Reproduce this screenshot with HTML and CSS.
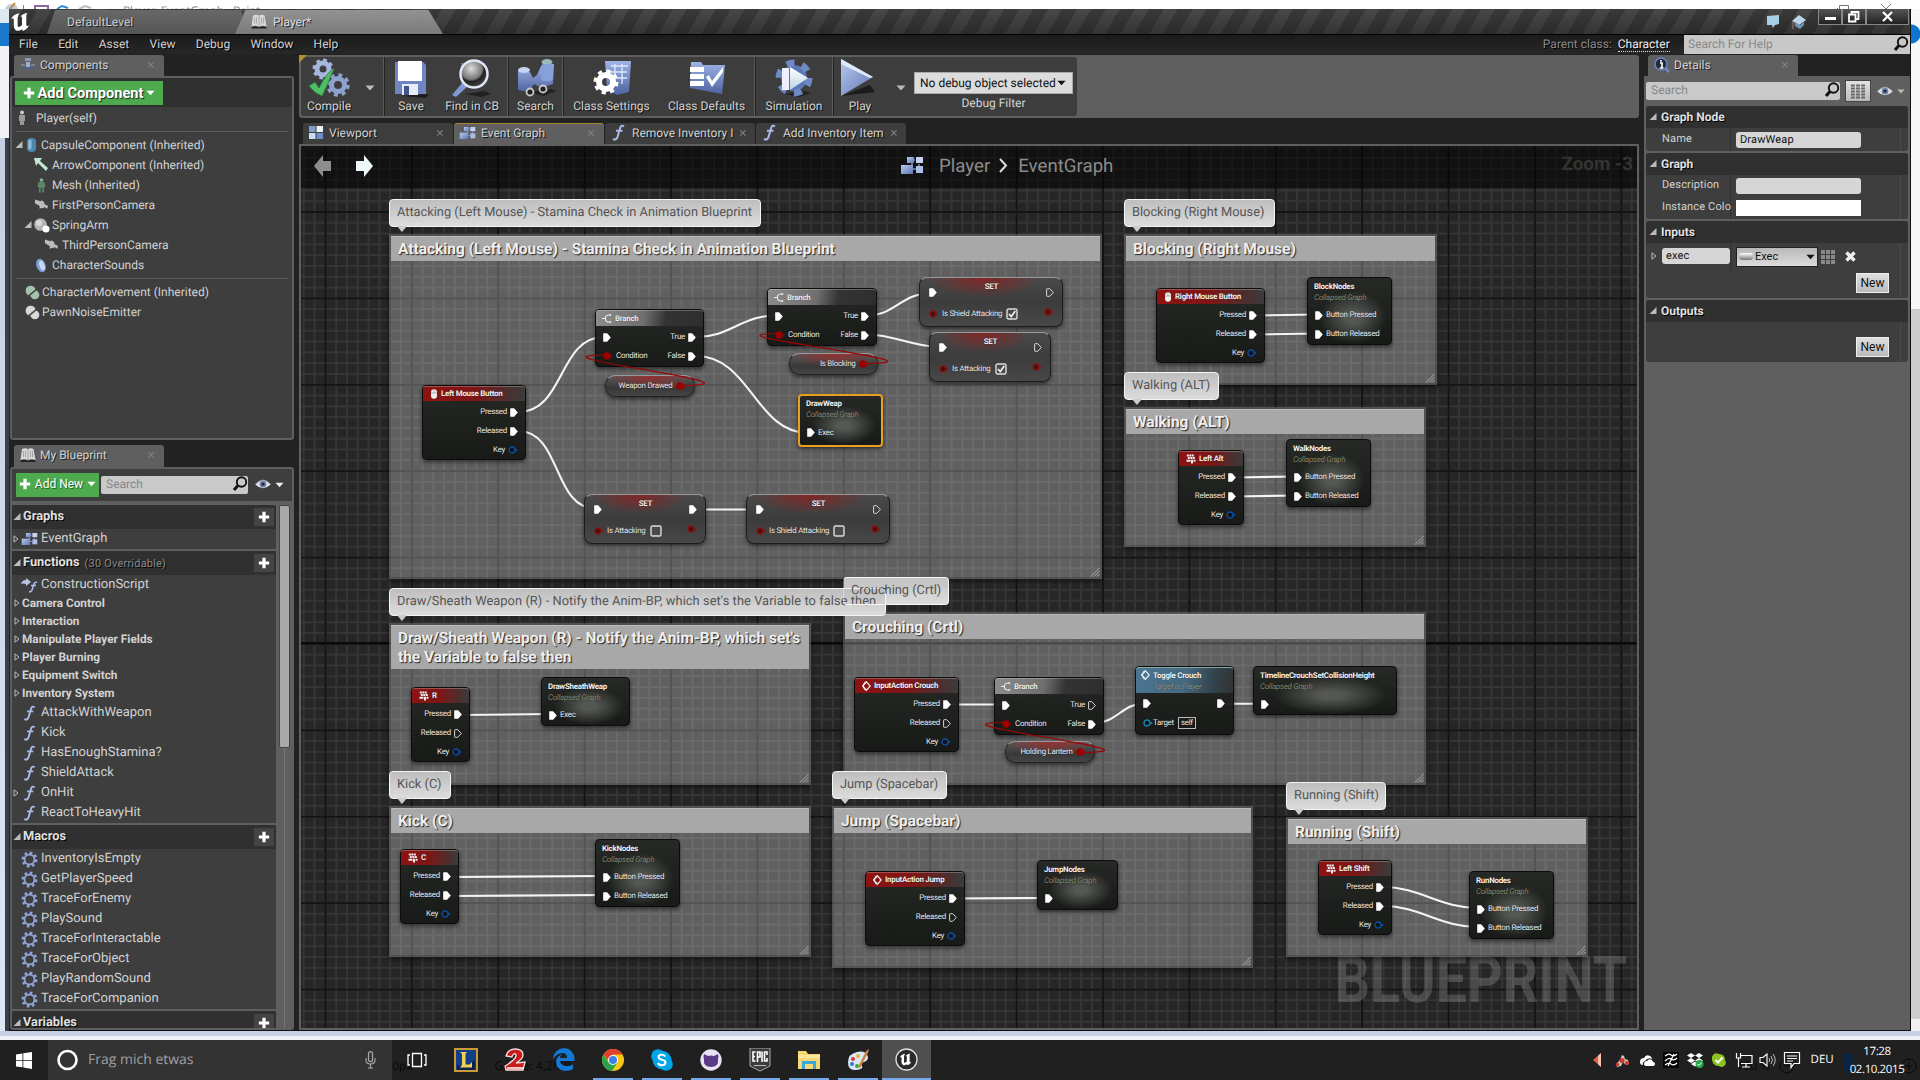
FILE: index.html
```html
<!DOCTYPE html>
<html lang="en">
<head>
<meta charset="utf-8">
<title>Player - Blueprint Editor</title>
<link rel="stylesheet" href="styles.css">
</head>
<body>
<svg class="defs" width="0" height="0">
  <defs>
    <linearGradient id="gBlue" x1="0" y1="0" x2="1" y2="1"><stop offset="0" stop-color="#b9c9ee"/><stop offset="1" stop-color="#5f76b4"/></linearGradient>
    <linearGradient id="gWhite" x1="0" y1="0" x2="0" y2="1"><stop offset="0" stop-color="#fff"/><stop offset="1" stop-color="#b9d6e4"/></linearGradient>
    <linearGradient id="gSteel" x1="0" y1="0" x2="0" y2="1"><stop offset="0" stop-color="#9fb4e6"/><stop offset="1" stop-color="#4c64a0"/></linearGradient>
    <radialGradient id="gLens" cx=".4" cy=".3" r=".8"><stop offset="0" stop-color="#ddd"/><stop offset=".5" stop-color="#777"/><stop offset=".6" stop-color="#222"/><stop offset="1" stop-color="#555"/></radialGradient>
  </defs>
  <symbol id="exec" viewBox="0 0 8 9"><path d="M.6.3H3.8Q4.4.3 4.8.9L7.8 4.5 4.8 8.1Q4.4 8.7 3.8 8.7H.6Q.2 8.7.2 8.2V.8Q.2.3.6.3z" fill="#fff"/></symbol>
  <symbol id="exec-off" viewBox="0 0 8 9"><path d="M1.2.7H3.7L7.3 4.5 3.7 8.3H1.2Q.6 8.3.6 7.7V1.3Q.6.7 1.2.7z" fill="none" stroke="#d8d8d8" stroke-width="1"/></symbol>
  <symbol id="bool" viewBox="0 0 10 8"><circle cx="4" cy="4" r="3.8" fill="#9c0000"/><path d="M7.6 2.2L9.8 4 7.6 5.8z" fill="#9c0000"/></symbol>
  <symbol id="bool-off" viewBox="0 0 10 8"><circle cx="4" cy="4" r="2.8" fill="#3a1212" stroke="#8a0e0e" stroke-width="1.7"/><path d="M7.4 2.4L9.6 4 7.4 5.6z" fill="#8a0e0e"/></symbol>
  <symbol id="key" viewBox="0 0 10 8"><circle cx="4" cy="4" r="3" fill="#10131a" stroke="#0d4fa6" stroke-width="1.3"/><path d="M7.5 2.3L9.7 4 7.5 5.7z" fill="#0d4fa6"/></symbol>
  <symbol id="obj" viewBox="0 0 10 8"><circle cx="4" cy="4" r="3" fill="#10131a" stroke="#1583ac" stroke-width="1.4"/><path d="M7.5 2.3L9.7 4 7.5 5.7z" fill="#1583ac"/></symbol>
  <symbol id="branch" viewBox="0 0 10 9"><path d="M0 4.5H3.4M9 1H6.5Q3.4 1.3 3.4 4.5T6.5 8H9" fill="none" stroke="#eee" stroke-width="1.1"/><path d="M7.6 0L9.8 1 7.6 2.2zM7.6 6.8L9.8 8 7.6 9z" fill="#eee"/></symbol>
  <symbol id="mouse" viewBox="0 0 8 10"><rect x="1" y=".3" width="6" height="9.4" rx="3" fill="#eee"/><path d="M1 4H7M4 .4V4" stroke="#999" stroke-width=".7"/></symbol>
  <symbol id="keys" viewBox="0 0 10 10"><path d="M.8.5h2v2h-2zM3.3.5h2v2h-2zM5.800.5h2v2h-2zM1.800 3.1h2v2h-2zM4.300 3.1h2v2h-2zM6.800 3.1h2v2h-2zM.5 5.700h4v2h-4zM5 5.700h2v3.800h-2zM7.500 5.700h2v2h-2z" fill="#eee"/></symbol>
  <symbol id="diamond" viewBox="0 0 9 10"><path d="M4.5.8L8.2 5 4.5 9.2.8 5z" fill="none" stroke="#eee" stroke-width="1.2"/><path d="M3.3.5L.5 5 3.3 9.5" fill="none" stroke="#eee" stroke-width="1"/></symbol>
  <symbol id="check" viewBox="0 0 12 12"><rect x="1" y="1" width="10" height="10" rx="1.5" fill="#4a4a4a" stroke="#ddd" stroke-width="1.4"/><path d="M3 6l2.2 2.6L9.3 3" fill="none" stroke="#eee" stroke-width="1.7"/></symbol>
  <symbol id="uncheck" viewBox="0 0 12 12"><rect x="1" y="1" width="10" height="10" rx="1.5" fill="#4a4a4a" stroke="#ddd" stroke-width="1.4"/></symbol>
  <symbol id="grip" viewBox="0 0 10 10"><path d="M1 9.5L9.5 1M4 9.5L9.5 4M7 9.5L9.5 7" stroke="#aaa" stroke-width="1"/></symbol>
  <symbol id="open" viewBox="0 0 8 8"><path d="M7.5 0V7H.5z" fill="#bbb"/></symbol>
  <symbol id="closed" viewBox="0 0 6 8"><path d="M1 .8L5 4 1 7.2z" fill="none" stroke="#bbb" stroke-width="1"/></symbol>
  <symbol id="caret" viewBox="0 0 10 6"><path d="M.5.5H9.5L5 5.5z" fill="currentColor"/></symbol>
  <symbol id="x" viewBox="0 0 8 8"><path d="M1.2 1.2l5.4 5.4M6.6 1.2L1.2 6.6" stroke="#828282" stroke-width="1.1"/></symbol>
  <symbol id="lens" viewBox="0 0 16 16"><circle cx="9.5" cy="6" r="4.7" fill="none" stroke="#111" stroke-width="1.9"/><path d="M6.2 9.3L2 14" stroke="#111" stroke-width="3"/></symbol>
  <symbol id="eye" viewBox="0 0 18 12"><path d="M.5 6Q9-4 17.5 6 9 14 .5 6z" fill="#dde0e6"/><circle cx="9" cy="5.6" r="3.6" fill="#6c7fa8"/><circle cx="9" cy="5.6" r="1.6" fill="#223"/><path d="M.5 6Q9-4 17.5 6" fill="none" stroke="#888" stroke-width=".8"/></symbol>
  <symbol id="plus" viewBox="0 0 12 12"><path d="M4.4 0.8h3.2v3.6h3.6v3.2H7.6v3.6H4.4V7.6H.8V4.4h3.6z" fill="#fff"/></symbol>
  <symbol id="book" viewBox="0 0 16 14"><path d="M2 1Q5-.5 8 1 11-.5 13.500 1L15.500 12Q11 10.500 8 12 4 10.500.5 12z" fill="#d8d8d8"/><path d="M8 1V12M3.500 3V9M5.500 3V9M10.500 3V9M12.500 3V9" stroke="#999" stroke-width=".8"/><path d="M.5 12.500Q4 11 8 12.800 12 11 15.500 12.500V14H.5z" fill="#222"/></symbol>
  <symbol id="graph" viewBox="0 0 24 19"><path d="M9 4h6M12 13h4M19 8v4M12 6v6" stroke="#7d90bd" stroke-width="1.500"/><rect x="7" y="1" width="7" height="6" fill="url(#gBlue)"/><rect x="16" y="1" width="7" height="6" fill="#c6d2ef"/><rect x="1" y="9" width="12" height="9" fill="url(#gBlue)"/><rect x="16" y="10" width="7" height="7" fill="#aebfe6"/></symbol>
  <symbol id="func" viewBox="0 0 14 17"><path d="M12.500 2.500Q10 .5 8.800 3.500L6 13Q5 16.500 1.500 15M4.500 6.800H11" fill="none" stroke="#a9bbea" stroke-width="2"/></symbol>
  <symbol id="gear" viewBox="0 0 16 16"><circle cx="8" cy="8" r="4.700" fill="none" stroke="#8fa3d6" stroke-width="1.800"/><circle cx="8" cy="8" r="6.400" fill="none" stroke="#8fa3d6" stroke-width="2.300" stroke-dasharray="2.513 2.513"/></symbol>
  <symbol id="camera" viewBox="0 0 16 14"><path d="M1 1l6 2 1-1 3 2v2l4 2-1 3-3-2-2 3-3-1 0-3-5-3z" fill="#bbb"/><path d="M6 11l3 2 1-3z" fill="#333"/></symbol>
  <symbol id="twoballs" viewBox="0 0 16 16"><circle cx="6" cy="6" r="5.300" fill="currentColor"/><circle cx="10.500" cy="10.500" r="4.800" fill="currentColor"/><path d="M3 12.500L13 4" stroke="#444" stroke-width="1.700"/></symbol>
  <symbol id="ulogo" viewBox="0 0 24 20"><path d="M1 7Q3 2 10 .8 8 3 8 5.500V14Q8 15.500 9.500 15 11 14.500 12.500 13V5.500Q12.500 4 10.800 4 14 1 18 .3 17 2 17 4V13.500Q18 15 19.800 13.500 18 18 13.500 19.300L12.600 17.500Q10 19.500 7 19 4 18 4 14V8Q4 6 3 6T1 7z" fill="#fff"/></symbol>
</svg>

<div class="desktop">
  <div class="back-top"><svg width="110" height="9"><path d="M5 9Q7 4 12 4T18 9z" fill="#b8cfe6"/><path d="M10 9L15 3" stroke="#c98a3d" stroke-width="2"/><path d="M23.500 5v4M115.500 5v4" stroke="#888"/><path d="M35 9V6H48V9" fill="none" stroke="#8c6aa0" stroke-width="2"/><path d="M57 9l5-3 6 2" stroke="#2a88d8" stroke-width="2" fill="none"/><path d="M79 9l6-3 6 2" stroke="#bbb" stroke-width="2" fill="none"/></svg><span>Player_EventGraph - Paint</span><svg class="bt-ctl" width="60" height="9"><path d="M4.500 9V5.500h9V9M2.500 9V8" fill="none" stroke="#777"/><path d="M46 4l5 5M56 4l-5 5" stroke="#777"/></svg></div>
  <div class="back-left"><i class="bl-w"></i><i class="bl-b"></i><i class="bl-l"></i><i class="bl-s"></i></div>

  <main class="window">
    <header class="titlebar">
      <svg class="logo" width="23" height="20"><use href="#ulogo"/></svg>
      <div class="wtabs">
        <div class="wtab back"><span>DefaultLevel</span></div>
        <div class="wtab front"><svg width="16" height="15"><use href="#book"/></svg><span>Player*</span><svg class="cl" width="8" height="8"><use href="#x"/></svg></div>
      </div>
      <div class="wctl">
        <svg width="40" height="18" viewBox="0 0 40 18"><path d="M1 4l12-1v9l-4 1-2 3-1-3H1z" fill="#a7d0e6"/><path d="M26 9l7-6 7 5-7 5z" fill="#bcd6ea"/><path d="M29 10v4l5 3 4-4v-3l-4 3z" fill="#6d93b5"/><path d="M27 9v8" stroke="#a77" /></svg>
        <div class="winbtns"><b><i class="mini"></i></b><b><svg width="12" height="12"><path d="M3.500 3V1h7v7h-2M1 3.500h6.500v7H1z" fill="none" stroke="#fff" stroke-width="1.800"/></svg></b><b class="wide"><svg width="11" height="11"><path d="M1 1l9 9M10 1l-9 9" stroke="#fff" stroke-width="2.200"/></svg></b></div>
      </div>
    </header>
    <nav class="menubar">
      <span>File</span><span>Edit</span><span>Asset</span><span>View</span><span>Debug</span><span>Window</span><span>Help</span>
      <div class="parent">Parent class: <a>Character</a></div>
      <div class="help">Search For Help<svg width="16" height="16"><use href="#lens"/></svg></div>
    </nav>

    <div class="content">
      <aside class="left">
        <div class="ptab"><svg width="16" height="14" viewBox="0 0 16 14"><path d="M1 9l4-2h6l4 2-3 3H4z" fill="#55607a"/><rect x="5" y="0" width="6" height="3" fill="#8a97b5"/><rect x="6" y="4" width="4" height="5" fill="#9fb0d8"/><path d="M1 7h4M11 7h4" stroke="#aaa"/></svg><span>Components</span><svg class="cl" width="8" height="8"><use href="#x"/></svg></div>
        <section class="panel components">
          <div class="addbar"><button class="addc"><svg width="12" height="12"><use href="#plus"/></svg>Add Component<svg width="9" height="6"><use href="#caret"/></svg></button></div>
          <div class="row self"><svg width="8" height="16" viewBox="0 0 8 16"><circle cx="4" cy="2.500" r="2" fill="#ccc"/><path d="M1 5h6v6H6v4H2v-4H1z" fill="#999"/></svg>Player(self)</div>
          <hr>
          <div class="row d0"><svg width="8" height="8"><use href="#open"/></svg><svg width="10" height="15" viewBox="0 0 10 15"><rect width="9" height="14" rx="4" fill="#4d86ad"/><rect x="1.500" y="1.500" width="3" height="10" rx="1.500" fill="#8fbddd"/></svg>CapsuleComponent (Inherited)</div>
          <div class="row d1"><svg width="15" height="14" viewBox="0 0 15 14"><path d="M0 0h8L6 3l8 7-2 3-8-8-2 3z" fill="#bfe8cf"/></svg>ArrowComponent (Inherited)</div>
          <div class="row d1"><svg width="15" height="15" viewBox="0 0 15 15"><circle cx="7.500" cy="2" r="1.800" fill="#8bb391"/><path d="M4.500 4h6l1 5h-1.500v5.500H8.300V10H6.700v4.500H5V9H3.500z" fill="#5d8567"/></svg>Mesh (Inherited)</div>
          <div class="row d1"><svg width="15" height="14"><use href="#camera"/></svg>FirstPersonCamera</div>
          <div class="row d1a"><svg width="8" height="8"><use href="#open"/></svg><svg width="16" height="15" viewBox="0 0 16 15"><circle cx="6.500" cy="6.500" r="6.300" fill="#b5b5b5"/><circle cx="5" cy="5" r="3" fill="#d8d8d8"/><circle cx="12" cy="11" r="3.500" fill="#fff"/></svg>SpringArm</div>
          <div class="row d2"><svg width="15" height="14"><use href="#camera"/></svg>ThirdPersonCamera</div>
          <div class="row d1"><svg width="15" height="15" viewBox="0 0 15 15"><ellipse cx="7" cy="7.500" rx="4.500" ry="7" fill="#7f9fd6" transform="rotate(-20 7 7.500)"/><ellipse cx="8" cy="7.500" rx="2.500" ry="5" fill="#c9daf7" transform="rotate(-20 8 7.500)"/></svg>CharacterSounds</div>
          <hr>
          <div class="row d3 green"><svg width="15" height="15"><use href="#twoballs"/></svg>CharacterMovement (Inherited)</div>
          <div class="row d3"><svg width="15" height="15"><use href="#twoballs"/></svg>PawnNoiseEmitter</div>
        </section>

        <div class="ptab second"><svg width="16" height="14"><use href="#book"/></svg><span>My Blueprint</span><svg class="cl" width="8" height="8"><use href="#x"/></svg></div>
        <section class="panel blueprint">
          <div class="bpbar"><button class="addn"><svg width="12" height="12"><use href="#plus"/></svg>Add New<svg width="9" height="6"><use href="#caret"/></svg></button><div class="search">Search<svg width="16" height="16"><use href="#lens"/></svg></div><svg class="eye" width="18" height="11"><use href="#eye"/></svg><svg width="9" height="6"><use href="#caret"/></svg></div>
          <div class="bplist">
            <div class="groups">
              <div class="group"><h3><svg width="8" height="8"><use href="#open"/></svg>Graphs<i><svg width="12" height="12"><use href="#plus"/></svg></i></h3>
                <div class="item"><svg class="tw" width="6" height="8"><use href="#closed"/></svg><svg width="17" height="14"><use href="#graph"/></svg>EventGraph</div></div>
              <div class="group"><h3><svg width="8" height="8"><use href="#open"/></svg>Functions<small>(30 Overridable)</small><i><svg width="12" height="12"><use href="#plus"/></svg></i></h3>
                <div class="item"><svg width="17" height="15" viewBox="0 0 17 15"><path d="M0 6q1-4 5-4V0l5 4-5 4V6Q2 5 0 6z" fill="#b9c4e0"/><path d="M16 4.500Q14 3.500 13 6l-2 6q-1 2.500-3 1.500M10 7.500h5" fill="none" stroke="#a9bbea" stroke-width="1.600"/></svg>ConstructionScript</div>
                <div class="cat"><svg class="tw" width="6" height="8"><use href="#closed"/></svg>Camera Control</div>
                <div class="cat"><svg class="tw" width="6" height="8"><use href="#closed"/></svg>Interaction</div>
                <div class="cat"><svg class="tw" width="6" height="8"><use href="#closed"/></svg>Manipulate Player Fields</div>
                <div class="cat"><svg class="tw" width="6" height="8"><use href="#closed"/></svg>Player Burning</div>
                <div class="cat"><svg class="tw" width="6" height="8"><use href="#closed"/></svg>Equipment Switch</div>
                <div class="cat"><svg class="tw" width="6" height="8"><use href="#closed"/></svg>Inventory System</div>
                <div class="item"><svg width="17" height="16"><use href="#func"/></svg>AttackWithWeapon</div>
                <div class="item"><svg width="17" height="16"><use href="#func"/></svg>Kick</div>
                <div class="item"><svg width="17" height="16"><use href="#func"/></svg>HasEnoughStamina?</div>
                <div class="item"><svg width="17" height="16"><use href="#func"/></svg>ShieldAttack</div>
                <div class="item"><svg class="tw" width="6" height="8"><use href="#closed"/></svg><svg width="17" height="16"><use href="#func"/></svg>OnHit</div>
                <div class="item"><svg width="17" height="16"><use href="#func"/></svg>ReactToHeavyHit</div></div>
              <div class="group"><h3><svg width="8" height="8"><use href="#open"/></svg>Macros<i><svg width="12" height="12"><use href="#plus"/></svg></i></h3>
                <div class="item"><svg width="17" height="17"><use href="#gear"/></svg>InventoryIsEmpty</div>
                <div class="item"><svg width="17" height="17"><use href="#gear"/></svg>GetPlayerSpeed</div>
                <div class="item"><svg width="17" height="17"><use href="#gear"/></svg>TraceForEnemy</div>
                <div class="item"><svg width="17" height="17"><use href="#gear"/></svg>PlaySound</div>
                <div class="item"><svg width="17" height="17"><use href="#gear"/></svg>TraceForInteractable</div>
                <div class="item"><svg width="17" height="17"><use href="#gear"/></svg>TraceForObject</div>
                <div class="item"><svg width="17" height="17"><use href="#gear"/></svg>PlayRandomSound</div>
                <div class="item"><svg width="17" height="17"><use href="#gear"/></svg>TraceForCompanion</div></div>
              <div class="group"><h3><svg width="8" height="8"><use href="#open"/></svg>Variables<i><svg width="12" height="12"><use href="#plus"/></svg></i></h3></div>
            </div>
            <div class="scroll"><i></i></div>
          </div>
        </section>
      </aside>

      <section class="center">
        <div class="toolwrap">
          <div class="toolbar">
            <div class="tool t52 first"><svg width="42" height="40" viewBox="0 0 42 40"><circle cx="15" cy="11" r="6" fill="none" stroke="#a6b6de" stroke-width="5"/><circle cx="15" cy="11" r="9" fill="none" stroke="#a6b6de" stroke-width="3" stroke-dasharray="3.530 3.530"/><circle cx="30" cy="27" r="6.500" fill="none" stroke="#8fa1cf" stroke-width="5"/><circle cx="30" cy="27" r="10" fill="none" stroke="#8fa1cf" stroke-width="3.500" stroke-dasharray="3.930 3.930"/><path d="M1 28l6-4 4 6Q17 17 26 10q-4 12-12 28-8-3-13-10z" fill="#4fbf67" stroke="#287a3c" stroke-width=".8"/></svg>Compile</div>
            <div class="tool t28"><svg width="10" height="6"><use href="#caret"/></svg></div><i class="sep"></i>
            <div class="tool t52"><svg width="36" height="40" viewBox="0 0 36 40"><path d="M2 4h28l3 3v29H2z" fill="#6f86c2"/><path d="M31 36l5 1-4 3-24-2z" fill="#1d1d1d"/><rect x="5" y="3" width="24" height="20" fill="#fff"/><rect x="9" y="26" width="16" height="11" fill="#e8ecf7"/><rect x="11" y="28" width="5" height="9" fill="#3f5690"/></svg>Save</div>
            <div class="tool t70"><svg width="42" height="40" viewBox="0 0 42 40"><rect x="10" y="5" width="24" height="20" fill="#5a71ad"/><path d="M12 24L1 37l4 2 12-11z" fill="#7f97d4"/><path d="M14 36l20-3 6 3-10 3z" fill="#222"/><circle cx="23" cy="16" r="13.500" fill="url(#gLens)" stroke="#dfe6f5" stroke-width="2.500"/></svg>Find in CB</div><i class="sep"></i>
            <div class="tool t53"><svg width="40" height="40" viewBox="0 0 40 40"><path d="M13 34l22-3 5 2-12 5z" fill="#222"/><path d="M2 12l12 2 3 6 4-3 4-9 13-2-1 20-12 4-7-4-5 8-11-2z" fill="url(#gSteel)"/><ellipse cx="8" cy="12" rx="6" ry="3" fill="#c5d3f2"/><ellipse cx="31" cy="4" rx="5.500" ry="3" fill="#9bb" /><rect x="25" y="6" width="12" height="17" rx="3" fill="#87a0dc"/><circle cx="14" cy="34" r="3.500" fill="#222" stroke="#ccc" stroke-width="1.800"/><circle cx="27" cy="31" r="3.500" fill="#222" stroke="#ccc" stroke-width="1.800"/></svg>Search</div><i class="sep"></i>
            <div class="tool t95"><svg width="42" height="40" viewBox="0 0 42 40"><path d="M14 3h26l-2 31-12 3-10-5z" fill="url(#gSteel)"/><path d="M20 8h17M19 14h17M19 20h17M24 6v20M31 6v20" stroke="#dfe8fa" stroke-width="1.300"/><circle cx="15" cy="24" r="7" fill="none" stroke="#fff" stroke-width="6"/><circle cx="15" cy="24" r="10.500" fill="none" stroke="#fff" stroke-width="4" stroke-dasharray="4.120 4.120"/></svg>Class Settings</div>
            <div class="tool t95"><svg width="42" height="40" viewBox="0 0 42 40"><path d="M5 4h10l2 3h22l-3 29L4 30z" fill="url(#gSteel)"/><path d="M4 9h14v5H4zM4 16h14v5H4zM4 23h14v5H4z" fill="#fff"/><path d="M20 19l3-2 3 6L37 9v5L26 29z" fill="#fff"/></svg>Class Defaults</div><i class="sep"></i>
            <div class="tool t76"><svg width="42" height="40" viewBox="0 0 42 40"><path d="M12 36l20-3 6 2-12 4z" fill="#222"/><circle cx="21" cy="20" r="10" fill="#5c76b5" stroke="#5c76b5" stroke-width="6"/><circle cx="21" cy="20" r="15" fill="none" stroke="#6f88c6" stroke-width="7" stroke-dasharray="7.850 7.850"/><path d="M9 10h7v22H9z" fill="#eef"/><path d="M17 9l18 11-18 12z" fill="url(#gWhite)"/></svg>Simulation</div><i class="sep"></i>
            <div class="tool t52"><svg width="40" height="40" viewBox="0 0 40 40"><path d="M1 38L30 27l5 7z" fill="#1c1c1c"/><path d="M1 1l32 18L1 38z" fill="url(#gBlue)"/><path d="M1 1l32 18-3 1L1 6z" fill="#dfe9fb"/></svg>Play</div>
            <div class="tool t28"><svg width="10" height="6"><use href="#caret"/></svg></div>
            <div class="debug"><div>No debug object selected<svg width="9" height="6"><use href="#caret"/></svg></div>Debug Filter</div>
          </div>
          <i class="corner"></i>
        </div>
        <div class="gtabs">
          <div class="gtab"><svg width="14" height="15" viewBox="0 0 14 15"><path d="M0 1h6.500v6H0z" fill="#7d9fc9"/><path d="M7.500 1H14v6H7.500z" fill="#e8f4f2"/><path d="M0 8h6.500v6H0z" fill="#c9dcf3"/><path d="M7.500 8H14v6H7.500z" fill="#6d8fc9"/></svg><span>Viewport</span><svg class="cl" width="8" height="8"><use href="#x"/></svg></div>
          <div class="gtab on"><svg width="17" height="14"><use href="#graph"/></svg><span>Event Graph</span><svg class="cl" width="8" height="8"><use href="#x"/></svg></div>
          <div class="gtab"><svg width="15" height="17"><use href="#func"/></svg><span>Remove Inventory I</span><svg class="cl" width="8" height="8"><use href="#x"/></svg></div>
          <div class="gtab"><svg width="15" height="17"><use href="#func"/></svg><span>Add Inventory Item</span><svg class="cl" width="8" height="8"><use href="#x"/></svg></div>
        </div>

        <div class="graph">
          <div class="watermark">BLUEPRINT</div>
          <div class="board">
            <div class="comment c-attack"><h2>Attacking (Left Mouse) - Stamina Check in Animation Blueprint</h2><svg width="10" height="10"><use href="#grip"/></svg></div>
            <div class="comment c-block"><h2>Blocking (Right Mouse)</h2><svg width="10" height="10"><use href="#grip"/></svg></div>
            <div class="comment c-walk"><h2>Walking (ALT)</h2><svg width="10" height="10"><use href="#grip"/></svg></div>
            <div class="comment c-draw"><h2>Draw/Sheath Weapon (R) - Notify the Anim-BP, which set's the Variable to false then</h2><svg width="10" height="10"><use href="#grip"/></svg></div>
            <div class="comment c-kick"><h2>Kick (C)</h2><svg width="10" height="10"><use href="#grip"/></svg></div>
            <div class="comment c-crouch"><h2>Crouching (Crtl)</h2><svg width="10" height="10"><use href="#grip"/></svg></div>
            <div class="comment c-jump"><h2>Jump (Spacebar)</h2><svg width="10" height="10"><use href="#grip"/></svg></div>
            <div class="comment c-run"><h2>Running (Shift)</h2><svg width="10" height="10"><use href="#grip"/></svg></div>

            <svg class="wires" width="1920" height="1040">
              <g fill="none" stroke="#f4f4f4" stroke-width="2.100">
                <path d="M518 412C565 412 558 337 604 337"/><path d="M518 431C562 431 552 509 597 509"/>
                <path d="M696 337C730 337 742 315.500 776 315.500"/><path d="M696 356C750 356 756 433 808 433"/>
                <path d="M868 315.500C894 315.500 902 293.500 929 293.500"/><path d="M868 334.500C894 334.500 912 347 940 347"/>
                <path d="M696 509.500H756"/>
                <path d="M1256 315.500L1317 314.500M1256 334.500L1317 333.500M1235 477.500L1295 476.500M1235 496.500L1295 495.500"/>
                <path d="M461 715L550 714M450 877L604 876M450 896L604 895"/>
                <path d="M951 704.500H1003M1224 703.800H1264M953 898.500L1047 898"/>
                <path d="M1095 723C1116 723 1123 703.500 1144 703.500"/>
                <path d="M1383 887C1420 887 1440 908 1478 908M1383 906C1420 906 1440 927 1478 927"/>
              </g>
            </svg>

            <div class="bubble b-attack">Attacking (Left Mouse) - Stamina Check in Animation Blueprint</div>
            <div class="bubble b-block">Blocking (Right Mouse)</div>
            <div class="bubble b-walk">Walking (ALT)</div>
            <div class="bubble b-draw">Draw/Sheath Weapon (R) - Notify the Anim-BP, which set's the Variable to false then</div>
            <div class="bubble b-crouch">Crouching (Crtl)</div>
            <div class="bubble b-kick">Kick (C)</div>
            <div class="bubble b-jump">Jump (Spacebar)</div>
            <div class="bubble b-run">Running (Shift)</div>

            <div class="node event n-lmb"><h4><svg width="8" height="10"><use href="#mouse"/></svg>Left Mouse Button</h4><p>Pressed<svg class="e"><use href="#exec"/></svg></p><p>Released<svg class="e"><use href="#exec"/></svg></p><p>Key<svg class="d"><use href="#key"/></svg></p></div>
            <div class="node event n-rmb"><h4><svg width="8" height="10"><use href="#mouse"/></svg>Right Mouse Button</h4><p>Pressed<svg class="e"><use href="#exec"/></svg></p><p>Released<svg class="e"><use href="#exec"/></svg></p><p>Key<svg class="d"><use href="#key"/></svg></p></div>
            <div class="node event n-alt"><h4><svg width="10" height="10"><use href="#keys"/></svg>Left Alt</h4><p>Pressed<svg class="e"><use href="#exec"/></svg></p><p>Released<svg class="e"><use href="#exec"/></svg></p><p>Key<svg class="d"><use href="#key"/></svg></p></div>
            <div class="node event n-r"><h4><svg width="10" height="10"><use href="#keys"/></svg>R</h4><p>Pressed<svg class="e"><use href="#exec"/></svg></p><p>Released<svg class="e"><use href="#exec-off"/></svg></p><p>Key<svg class="d"><use href="#key"/></svg></p></div>
            <div class="node event n-c"><h4><svg width="10" height="10"><use href="#keys"/></svg>C</h4><p>Pressed<svg class="e"><use href="#exec"/></svg></p><p>Released<svg class="e"><use href="#exec"/></svg></p><p>Key<svg class="d"><use href="#key"/></svg></p></div>
            <div class="node event n-crouch"><h4><svg width="9" height="10"><use href="#diamond"/></svg>InputAction Crouch</h4><p>Pressed<svg class="e"><use href="#exec"/></svg></p><p>Released<svg class="e"><use href="#exec-off"/></svg></p><p>Key<svg class="d"><use href="#key"/></svg></p></div>
            <div class="node event n-jump"><h4><svg width="9" height="10"><use href="#diamond"/></svg>InputAction Jump</h4><p>Pressed<svg class="e"><use href="#exec"/></svg></p><p>Released<svg class="e"><use href="#exec-off"/></svg></p><p>Key<svg class="d"><use href="#key"/></svg></p></div>
            <div class="node event n-shift"><h4><svg width="10" height="10"><use href="#keys"/></svg>Left Shift</h4><p>Pressed<svg class="e"><use href="#exec"/></svg></p><p>Released<svg class="e"><use href="#exec"/></svg></p><p>Key<svg class="d"><use href="#key"/></svg></p></div>

            <div class="node branch n-b1"><h4><svg width="10" height="9"><use href="#branch"/></svg>Branch</h4><p><svg class="e"><use href="#exec"/></svg><span>True</span><svg class="e"><use href="#exec"/></svg></p><p><svg class="d"><use href="#bool"/></svg><em>Condition</em><span>False</span><svg class="e"><use href="#exec"/></svg></p></div>
            <div class="node branch n-b2"><h4><svg width="10" height="9"><use href="#branch"/></svg>Branch</h4><p><svg class="e"><use href="#exec"/></svg><span>True</span><svg class="e"><use href="#exec"/></svg></p><p><svg class="d"><use href="#bool"/></svg><em>Condition</em><span>False</span><svg class="e"><use href="#exec"/></svg></p></div>
            <div class="node branch n-b3"><h4><svg width="10" height="9"><use href="#branch"/></svg>Branch</h4><p><svg class="e"><use href="#exec"/></svg><span>True</span><svg class="e"><use href="#exec-off"/></svg></p><p><svg class="d"><use href="#bool"/></svg><em>Condition</em><span>False</span><svg class="e"><use href="#exec"/></svg></p></div>

            <div class="node var n-v1">Weapon Drawed<svg class="d"><use href="#bool"/></svg></div>
            <div class="node var n-v2">Is Blocking<svg class="d"><use href="#bool"/></svg></div>
            <div class="node var n-v3">Holding Lantern<svg class="d"><use href="#bool"/></svg></div>

            <div class="node set n-s1"><div><svg class="e"><use href="#exec"/></svg><b>SET</b><svg class="e"><use href="#exec-off"/></svg></div><div class="val"><svg class="d"><use href="#bool-off"/></svg><em>Is Shield Attacking</em><svg class="cb"><use href="#check"/></svg><svg class="d out"><use href="#bool-off"/></svg></div></div>
            <div class="node set n-s2"><div><svg class="e"><use href="#exec"/></svg><b>SET</b><svg class="e"><use href="#exec-off"/></svg></div><div class="val"><svg class="d"><use href="#bool-off"/></svg><em>Is Attacking</em><svg class="cb"><use href="#check"/></svg><svg class="d out"><use href="#bool-off"/></svg></div></div>
            <div class="node set n-s3"><div><svg class="e"><use href="#exec"/></svg><b>SET</b><svg class="e"><use href="#exec"/></svg></div><div class="val"><svg class="d"><use href="#bool-off"/></svg><em>Is Attacking</em><svg class="cb"><use href="#uncheck"/></svg><svg class="d out"><use href="#bool-off"/></svg></div></div>
            <div class="node set n-s4"><div><svg class="e"><use href="#exec"/></svg><b>SET</b><svg class="e"><use href="#exec-off"/></svg></div><div class="val"><svg class="d"><use href="#bool-off"/></svg><em>Is Shield Attacking</em><svg class="cb"><use href="#uncheck"/></svg><svg class="d out"><use href="#bool-off"/></svg></div></div>

            <div class="node coll n-draww sel"><h5>DrawWeap</h5><h6>Collapsed Graph</h6><p><svg class="e"><use href="#exec"/></svg>Exec</p></div>
            <div class="node coll n-blockn"><h5>BlockNodes</h5><h6>Collapsed Graph</h6><p><svg class="e"><use href="#exec"/></svg>Button Pressed</p><p><svg class="e"><use href="#exec"/></svg>Button Released</p></div>
            <div class="node coll n-walkn"><h5>WalkNodes</h5><h6>Collapsed Graph</h6><p><svg class="e"><use href="#exec"/></svg>Button Pressed</p><p><svg class="e"><use href="#exec"/></svg>Button Released</p></div>
            <div class="node coll n-sheath"><h5>DrawSheathWeap</h5><h6>Collapsed Graph</h6><p><svg class="e"><use href="#exec"/></svg>Exec</p></div>
            <div class="node coll n-kickn"><h5>KickNodes</h5><h6>Collapsed Graph</h6><p><svg class="e"><use href="#exec"/></svg>Button Pressed</p><p><svg class="e"><use href="#exec"/></svg>Button Released</p></div>
            <div class="node coll n-jumpn"><h5>JumpNodes</h5><h6>Collapsed Graph</h6><p><svg class="e"><use href="#exec"/></svg></p></div>
            <div class="node coll n-runn"><h5>RunNodes</h5><h6>Collapsed Graph</h6><p><svg class="e"><use href="#exec"/></svg>Button Pressed</p><p><svg class="e"><use href="#exec"/></svg>Button Released</p></div>
            <div class="node coll n-time"><h5>TimelineCrouchSetCollisionHeight</h5><h6>Collapsed Graph</h6><p><svg class="e"><use href="#exec"/></svg></p></div>
            <div class="node call n-toggle"><header><svg width="9" height="10"><use href="#diamond"/></svg><div><h5>Toggle Crouch</h5><h6>Target is Player</h6></div></header><p><svg class="e"><use href="#exec"/></svg><span></span><svg class="e"><use href="#exec"/></svg></p><p><svg class="d"><use href="#obj"/></svg>Target<u>self</u></p></div>

            <svg class="wires" width="1920" height="1040">
              <g fill="none" stroke="#9a0505" stroke-width="1.200">
                <path d="M679 385.500C787 385.500 512 355 606 355"/><path d="M863 363.500C971 363.500 684 333.500 780 333.500"/><path d="M1079 752.500C1187 752.500 910 722.500 1006 722.500"/>
              </g>
            </svg>
          </div>
          <div class="crumbs">
            <svg class="nav" width="17" height="22" viewBox="0 0 17 22"><path d="M0 11L9 0v6h8v10H9v6z" fill="#8d8d8d"/></svg>
            <svg class="nav" width="17" height="22" viewBox="0 0 17 22"><path d="M17 11L8 0v6H0v10h8v6z" fill="#eef8fa"/></svg>
            <div class="path"><svg width="24" height="19"><use href="#graph"/></svg><span>Player</span><svg width="9" height="15" viewBox="0 0 9 15"><path d="M1 1l6 6.500L1 14" fill="none" stroke="#ddd" stroke-width="2"/></svg><span>EventGraph</span></div>
            <b class="zoom">Zoom -3</b>
          </div>
        </div>
      </section>

      <aside class="right">
        <div class="ptab"><svg width="16" height="16" viewBox="0 0 16 16"><circle cx="7" cy="7" r="6" fill="#222a3a" stroke="#6d86c8" stroke-width="1.500"/><path d="M11 11l4 4" stroke="#6d86c8" stroke-width="2.500"/><path d="M6 6h2v5M5.500 11h4M7 3v1.800" stroke="#fff" stroke-width="1.600" fill="none"/></svg><span>Details</span><svg class="cl" width="8" height="8"><use href="#x"/></svg></div>
        <div class="details">
          <div class="dbar"><div class="search">Search<svg width="16" height="16"><use href="#lens"/></svg></div><button class="gridbtn"><svg width="14" height="15" viewBox="0 0 14 15"><path d="M0 1.500h14M0 4.500h14M0 7.500h14M0 10.500h14M0 13.500h14" stroke="#666" stroke-width="1.800" stroke-dasharray="3.800 1.300"/></svg></button><svg width="18" height="11"><use href="#eye"/></svg><svg class="car" width="8" height="5"><use href="#caret"/></svg></div>
          <div class="dsec"><h3><svg width="8" height="8"><use href="#open"/></svg>Graph Node</h3><div class="prop"><label>Name</label><div class="field">DrawWeap</div></div></div>
          <div class="dsec"><h3><svg width="8" height="8"><use href="#open"/></svg>Graph</h3><div class="prop h21"><label>Description</label><div class="field"></div></div><div class="prop"><label>Instance Colo</label><div class="swatch"></div></div></div>
          <div class="dsec"><h3><svg width="8" height="8"><use href="#open"/></svg>Inputs</h3><div class="prop pin"><label><svg width="6" height="8"><use href="#closed"/></svg><div class="field small">exec</div></label><button class="combo"><i></i>Exec<svg width="9" height="6"><use href="#caret"/></svg></button><svg class="g9" width="14" height="14" viewBox="0 0 14 14"><path d="M0 2h14M0 7h14M0 12h14" stroke="#888" stroke-width="4" stroke-dasharray="4 1"/></svg><svg class="del" width="11" height="11"><path d="M1.500 1.500l8 8M9.500 1.500l-8 8" stroke="#eee" stroke-width="3.500"/></svg></div><div class="new"><button>New</button></div></div>
          <div class="dsec last"><h3><svg width="8" height="8"><use href="#open"/></svg>Outputs</h3><div class="new"><button>New</button></div></div>
        </div>
      </aside>
    </div>
  </main>

  <div class="back-right"><i class="br-a"></i><i class="br-b"></i><i class="br-c"></i></div>
  <div class="back-bottom"></div>
</div>

<footer class="taskbar">
  <div class="start"><svg width="16" height="17" viewBox="0 0 16 17"><path d="M0 2.500l6.500-1V8H0zM7.300 1.300L16 0v8H7.300zM0 8.800h6.500v6.500L0 14.500zM7.300 8.800H16V17l-8.700-1.500z" fill="#fff"/></svg></div>
  <div class="cortana"><svg width="21" height="22"><circle cx="10.500" cy="11" r="9" fill="none" stroke="#fff" stroke-width="2.600"/></svg><span>Frag mich etwas</span><svg class="mic" width="11" height="18"><rect x="3.500" y=".7" width="4" height="10" rx="2" fill="none" stroke="#aaa" stroke-width="1.200"/><path d="M1 7v2q0 4 4.500 4T10 9V7M5.500 13v4M3 17h5" fill="none" stroke="#aaa" stroke-width="1.100"/></svg></div>
  <div class="ghost"><span>0px</span><span>Größe: 4,2MB</span></div>
  <div class="apps">
    <div class="app"><svg width="20" height="16"><path d="M5.500 1.500h9v13h-9z" fill="none" stroke="#fff" stroke-width="1.300"/><path d="M3 3H1v10h2M17 3h2v10h-2" fill="none" stroke="#fff" stroke-width="1.300"/></svg></div>
    <div class="app"><svg width="24" height="24"><rect x="1" y="1" width="22" height="22" fill="#123f88" stroke="#c99a36" stroke-width="2"/><path d="M3 16Q8 22 21 12V22H3z" fill="#0b2350"/><path d="M6 4h7l-1.500 2v10.500h4L18 14v5.500H6l2-2.500V6z" fill="#f2cf57"/></svg></div>
    <div class="app"><svg width="24" height="24"><path d="M3 8Q5 1 12 1q8 0 8 6 0 4-7 8l9-1-2 8H3l-1-4Q12 12 13 8q0-3-2-2-2 1-2 3z" fill="#c81d1d" stroke="#f5dede" stroke-width="1.300"/><path d="M4 20h17" stroke="#fff" stroke-width="1.500"/></svg></div>
    <div class="app"><svg width="22" height="23" viewBox="0 0 22 23"><path d="M0 11Q1 1 11 0q10 1 10.500 11v2H7q1 5 7 5 3 0 6-1.500V21q-3 2-8 2-9-1-9-9 0-5 6-8-2 2-2 4h7Q14 5 9.500 5 4 5 0 11z" fill="#1279d6"/></svg></div>
    <div class="app run"><svg width="22" height="22" viewBox="0 0 22 22"><circle cx="11" cy="11" r="11" fill="#fbc513"/><path d="M1.500 5.500A11 11 0 0 1 20.500 5.500H11L7 12.500z" fill="#df3e30"/><path d="M1.500 5.500A11 11 0 0 0 10 22L15.500 13.500H6.500z" fill="#2ba24c"/><circle cx="11" cy="11" r="5" fill="#fff"/><circle cx="11" cy="11" r="4" fill="#3f7fe8"/></svg></div>
    <div class="app run"><svg width="22" height="22" viewBox="0 0 22 22"><circle cx="7" cy="7" r="6.800" fill="#00a6e8"/><circle cx="15" cy="15" r="6.800" fill="#00a6e8"/><circle cx="11" cy="11" r="9.300" fill="#00a6e8"/><path d="M14.500 7.500Q13 5.500 10.500 5.700 7.500 6 7.500 8T11 10.700Q14.700 11.500 14.500 13.800 14 16.300 11 16.300 8 16.300 7 14" fill="none" stroke="#fff" stroke-width="2"/></svg></div>
    <div class="app run"><svg width="22" height="22" viewBox="0 0 22 22"><circle cx="11" cy="11" r="10.700" fill="#e9e2f2"/><path d="M4 5l4 2q3-1 6 0l4-2q1 3 0 5 1 8-7 8T4 10q-1-2 0-5z" fill="#5b3b86"/></svg></div>
    <div class="app run"><svg width="22" height="24" viewBox="0 0 22 24"><path d="M1 0h20v18l-10 5-10-5z" fill="#3c3c3c" stroke="#aaa"/><g fill="none" stroke="#fff" stroke-width="1.600"><path d="M6.500 4H4v9h2.500M4 8.500h2M8.500 14V4H11v5H8.500M13 3.500V14M18 7V4h-2.500v9H18v-3"/></g><path d="M5 17.500h12" stroke="#bbb"/></svg></div>
    <div class="app run"><svg width="22" height="20" viewBox="0 0 22 20"><path d="M0 1h8l2 3h12v15H0z" fill="#f6d873"/><path d="M0 5h22v3H0z" fill="#fbe89b"/><path d="M4 19v-8h14v8h-3v-5H7v5z" fill="#3aa6dd"/></svg></div>
    <div class="app run"><svg width="24" height="24" viewBox="0 0 24 24"><path d="M2 14Q2 6 11 4t11 5q0 4-4 5t-2 4-6 4-8-8z" fill="#d8e8f4"/><circle cx="7" cy="11" r="2" fill="#d33"/><circle cx="12" cy="8" r="2" fill="#e9b52c"/><circle cx="6" cy="16" r="2" fill="#3a6fd0"/><circle cx="11" cy="18" r="2" fill="#3a3"/><path d="M12 19L20 3l3-2-1 4-8 15z" fill="#c98442"/></svg></div>
    <div class="app run active"><svg width="23" height="23" viewBox="0 0 23 23"><circle cx="11.500" cy="11.500" r="10.500" fill="#2b2b2b" stroke="#ddd" stroke-width="1.300"/><svg x="4" y="5" width="15" height="13"><use href="#ulogo"/></svg></svg></div>
  </div>
  <div class="ghost2"><span>100 %</span><svg width="145" height="28"><circle cx="12" cy="14" r="7" fill="none" stroke="#0a0a0a"/><path d="M8 14h8" stroke="#0a0a0a"/><path d="M68 2h11v14l-5 7-6-7z" fill="#0a2440"/><circle cx="134" cy="14" r="7" fill="none" stroke="#0a0a0a"/><path d="M130 14h8M134 10v8" stroke="#0a0a0a"/></svg></div>
  <div class="tray">
    <svg width="24" height="16" viewBox="0 0 24 16"><path d="M7 8l8-7v14z" fill="#e2603e"/><path d="M12 4l3-3v14l-3-3z" fill="#f6c2b0"/></svg>
    <svg width="24" height="16" viewBox="0 0 24 16"><path d="M6 12l4-4 2-5 2 1 1 3 3 1 1 4-3 1-3-3-2 4-4 1z" fill="#c9c9c9"/><circle cx="12" cy="8.500" r="2.600" fill="#cf3a2d"/><circle cx="17" cy="11" r="2" fill="#cf3a2d"/><circle cx="7.500" cy="12.500" r="1.800" fill="#cf3a2d"/></svg>
    <svg width="24" height="16" viewBox="0 0 24 16"><path d="M5 10q0-4 4-4 2-4 6-2 2 1 2 3-4-2-7 2-3 1-2 4-3 0-3-3z" fill="#fff"/><path d="M9 12q0-3 3-3 2-3 5-1l1 2q2 0 2 2t-2 2h-7q-2 0-2-2z" fill="#fff"/></svg>
    <svg width="24" height="16" viewBox="0 0 24 16"><rect x="4" width="16" height="16" fill="#050505"/><path d="M6 4q4-3 6-1 3 2 6-1M6 9q4-4 6-2 3 2 6-1M6 13q4-3 6-1 3 2 6-1M15 2L9 14" fill="none" stroke="#fff" stroke-width="1.300"/></svg>
    <svg width="24" height="16" viewBox="0 0 24 16"><path d="M8 1l4 2.500L8 6 4 3.500zM16 1l4 2.500L16 6l-4-2.500zM8 6l4 2.500L8 11 4 8.500zM16 6l4 2.500-4 2.500-4-2.500zM8 12l4-2.500 4 2.500-4 2.500z" fill="#fff"/><circle cx="16.500" cy="12" r="4" fill="#2aa74a"/><path d="M14.500 12l1.500 1.500 2.500-3" fill="none" stroke="#fff"/></svg>
    <svg width="24" height="16" viewBox="0 0 24 16"><path d="M6 3q2-3 6-1 6 0 6 6 2 4-1 6-2 2-5 0-6 0-7-6-1-3 1-5z" fill="#8cc21f"/><path d="M8.500 8l2.500 2.500 4.500-5" fill="none" stroke="#fff" stroke-width="2"/></svg>
    <svg width="24" height="16" viewBox="0 0 24 16"><path d="M8 3.500h12v8H9M14 12v3M10 15h8M4.500 1v5h4V1M6.500 6v9" fill="none" stroke="#fff" stroke-width="1.200"/></svg>
    <svg width="24" height="16" viewBox="0 0 24 16"><path d="M4 5.500h3L11 2v12l-4-3.500H4z" fill="none" stroke="#fff" stroke-width="1.100"/><path d="M13 6q1.500 2 0 4M15 4q3 4 0 8M17 2q4.500 6 0 12" fill="none" stroke="#bbb"/></svg>
    <svg width="24" height="18" viewBox="0 0 24 18"><path d="M4.500 1.500h15v11H14l-3 4v-4H4.500z" fill="none" stroke="#fff" stroke-width="1.200"/><path d="M7 5h10M7 7.500h10M7 10h6" stroke="#fff"/></svg>
    <span class="lang">DEU</span>
    <div class="clock"><span>17:28</span><span>02.10.2015</span></div>
  </div>
</footer>
</body>
</html>
```
FILE: styles.css
```css
* { box-sizing: border-box; margin: 0; padding: 0; }
html, body { width: 1920px; height: 1080px; overflow: hidden; background: #fff; }
body { display: flex; flex-direction: column; font: 12px/16px Roboto, sans-serif; color: #d2d2d2; text-rendering: geometricPrecision; }
svg { display: block; flex: none; }
.defs { position: absolute; }
button { font: inherit; border: 0; }
em, i { font-style: normal; }
u { text-decoration: none; }

/* Desktop and the windows behind the editor */
.desktop { height: 1040px; display: grid; grid-template: 9px 1022px 9px / 9px 1902px 9px; background: #fff; }
.back-top { grid-column: 1 / 4; display: flex; overflow: hidden; color: #888; font: 12px/12px "Open Sans", sans-serif; }
.back-top svg { margin-right: 13px; }
.back-top span { padding-top: 5px; letter-spacing: -.3px; }
.back-top .bt-ctl { margin: 0 25px 0 auto; width: 60px; }
.back-left { display: flex; flex-direction: column; }
.bl-w { height: 14px; background: #dce9f3; }
.bl-b { height: 23px; background: #1a79cc; }
.bl-l { height: 92px; background: #f0f2f6; }
.bl-s { flex: 1; background: linear-gradient(90deg, transparent 5px, #39404c 5px), linear-gradient(#c3cee2, #dde6f2); }
.back-right { display: flex; flex-direction: column; }
.br-a { height: 300px; background: radial-gradient(circle at 0 25px, #0f74cf 9px, transparent 10px), #f6f7f9; }
.br-b { height: 710px; background: #cdcdcd; border-top: 0; }
.br-c { flex: 1; background: #f0f0f0; }
.back-bottom { grid-column: 1 / 4; background: linear-gradient(#c5d0e6 0 5px, #eef0f3 5px); }

/* Window chrome */
.window { background: #222; display: flex; flex-direction: column; min-height: 0; overflow: hidden; border-right: 1px solid #111; border-bottom: 1px solid #111; }
.titlebar { height: 26px; flex: none; display: flex; border-bottom: 1px solid #000; padding-left: 1px;
  background: linear-gradient(rgba(0,0,0,.1), rgba(0,0,0,.35)), repeating-linear-gradient(120deg, #505050 0 12px, #404040 12px 25px); }
.logo { margin: 3px 14px 0 0; }
.wtabs { display: flex; }
.wtab { height: 24px; margin-top: 1px; display: flex; align-items: center; color: #ccc; text-shadow: 1px 1px #222; padding-bottom: 1px; }
.wtab.back { width: 200px; padding-left: 20px; background: linear-gradient(#686868, #555); clip-path: polygon(4% 0, 97% 0, 100% 100%, 0 100%); }
.wtab.front { width: 208px; margin-left: -12px; padding: 0 20px 1px 16px; gap: 6px; background: linear-gradient(#929292, #7a7a7a); clip-path: polygon(5% 0, 93% 0, 100% 100%, 0 100%); color: #ddd; }
.wtab .cl { margin-left: auto; }
.wctl { margin-left: auto; display: flex; gap: 12px; padding-right: 1px; }
.wctl > svg { margin-top: 3px; }
.winbtns { display: flex; height: 16px; }
.winbtns b { width: 24px; border: 1px solid #888; border-top: 0; background: linear-gradient(#555, #222); display: flex; align-items: center; justify-content: center; }
.winbtns b.wide { width: 43px; }
.mini { width: 11px; height: 3px; background: #fff; margin-top: 4px; }
.menubar { height: 19px; flex: none; display: flex; align-items: center; gap: 20.300px; padding: 0 0 2px 10px; background: linear-gradient(#1b1b1b, #272727); text-shadow: 1px 1px #000; }
.parent { margin-left: auto; color: #8a8a8a; margin-right: -6px; }
.parent a { color: #eee; border-bottom: 1px dotted #ddd; display: inline-block; line-height: 14px; margin-left: 3px; }
.help { width: 226px; height: 19px; margin-bottom: -2px; background: #c8c8c8; color: #888; display: flex; align-items: center; justify-content: space-between; padding: 0 1px 1px 4px; text-shadow: none; }

.content { flex: 1; min-height: 0; display: grid; grid-template-columns: 284px 1340px 266px; grid-template-rows: minmax(0, 1fr); column-gap: 5px; padding: 1px 0 0 1px; }
.left, .right, .center { display: flex; flex-direction: column; min-width: 0; min-height: 0; }
.ptab { width: 150px; height: 21px; flex: none; margin-left: 4px; background: #5f5f5f; border-radius: 3px 3px 0 0; display: flex; align-items: center; gap: 4px; padding: 0 9px 2px 6px; text-shadow: 1px 1px #222; }
.ptab .cl, .gtab .cl { margin-left: auto; }
.panel { border: 2px solid #5f5f5f; border-radius: 3px; background: #3e3e3e; }

/* Components */
.components { height: 364px; flex: none; }
.addbar { height: 29px; background: #303030; padding: 3px 0 0 3px; }
.addc { width: 148px; height: 24px; padding-bottom: 1px; background: #4eaa4e; color: #fff; font-weight: 700; font-size: 14.600px; display: flex; align-items: center; justify-content: center; gap: 3px; text-shadow: 1px 1px 1px #222; }
.row { height: 20px; display: flex; align-items: center; gap: 3px; }
.components hr { border: 0; height: 1px; background: #5c5c5c; margin: 3px 4px; }
.self { height: 21px; padding-left: 6px; gap: 10px; }
.d0 { padding-left: 3px; gap: 4px; }
.d1 { padding-left: 22px; }
.d1a { padding-left: 12px; gap: 2px; }
.d2 { padding-left: 32px; }
.d3 { padding-left: 13px; gap: 2px; }
.d3 svg { color: #d8d8d8; }
.green svg { color: #a3c3aa; }

/* My Blueprint */
.second { margin-top: 5px; height: 22px; }
.blueprint { flex: 1; min-height: 0; display: flex; flex-direction: column; background: #5f5f5f; overflow: hidden; }
.bpbar { height: 32px; flex: none; background: #3e3e3e; display: flex; align-items: center; padding: 0 0 1px 4px; margin-bottom: 4px; color: #eee; }
.addn { width: 83px; height: 24px; background: #4eaa4e; color: #fff; display: flex; align-items: center; justify-content: center; gap: 4px; margin-right: 2px; padding-bottom: 1px; text-shadow: 1px 1px #276327; }
.search { background: #c9c9c9; color: #888; height: 18px; border-radius: 2px; display: flex; align-items: center; justify-content: space-between; padding: 0 0 1px 5px; flex: none; }
.bpbar .search { width: 147px; }
.bpbar .eye { margin: 0 3px 0 6px; }
.bplist { flex: 1; min-height: 0; display: flex; gap: 3px; overflow: hidden; }
.groups { width: 264px; display: flex; flex-direction: column; gap: 2px; font-size: 13px; min-height: 0; }
.group { background: #3e3e3e; flex: none; }
.group h3 { height: 24px; background: #303030; font: 700 12.800px/24px Roboto, sans-serif; display: flex; align-items: center; gap: 2px; padding: 0 2px 1px 1px; border-radius: 3px 3px 0 0; text-shadow: 1px 1px #000; color: #e0e0e0; }
.group h3 small { font: 11px/16px Roboto, sans-serif; letter-spacing: .2px; color: #888; margin-left: 3px; padding-top: 2px; }
.group h3 i { margin-left: auto; width: 20px; height: 18px; background: #444; display: flex; align-items: center; justify-content: center; }
.item { height: 20px; display: flex; align-items: center; gap: 3px; padding-left: 9px; }
.tw { margin: 0 1px 0 -8px; }
.item .tw { margin-right: -1px; }
.cat { height: 18px; display: flex; align-items: center; font-weight: 700; font-size: 11.800px; padding: 0 0 2px 10px; gap: 1px; }
.scroll { width: 12px; background: linear-gradient(90deg, transparent 5px, #777 5px, #777 6px, transparent 6px); }
.scroll i { display: block; width: 11px; height: 243px; background: #a8a8a8; border: 1px solid #444; border-radius: 2px; }

/* Toolbar */
.toolwrap { height: 63px; flex: none; background: #5f5f5f; border-radius: 3px; padding: 2px; position: relative; }
.corner { position: absolute; left: 0; top: 0; border: 4px solid; border-color: #b58f2c transparent transparent #b58f2c; }
.toolbar { width: 776px; height: 59px; background: #3d3d3d; display: flex; border-radius: 3px; }
.tool { display: flex; flex-direction: column; align-items: center; padding-top: 1px; white-space: nowrap; text-shadow: 1px 1px #111; line-height: 16px; }
.first { margin-left: 2px; }
.t28 { width: 28px; justify-content: center; padding: 3px 0 0 2px; color: #bbb; }
.t52 { width: 52px; } .t53 { width: 53px; } .t70 { width: 70px; } .t76 { width: 76px; } .t95 { width: 95px; }
.sep { width: 2px; background: #5a5a5a; border-right: 1px solid #222; }
.debug { width: 159px; padding-top: 15px; display: flex; flex-direction: column; align-items: center; line-height: 18px; }
.debug div { width: 159px; height: 22px; background: #dcdcdc; border: 1px solid #aaa; color: #111; display: flex; align-items: center; justify-content: space-between; padding: 0 6px 0 5px; white-space: nowrap; }

/* Graph tabs */
.gtabs { height: 21px; flex: none; margin-top: 5px; padding-left: 4px; display: flex; gap: 1px; }
.gtab { width: 150px; height: 21px; background: #3d3d3d; border-radius: 3px 3px 0 0; display: flex; align-items: center; gap: 6px; padding: 0 9px 2px 6px; text-shadow: 1px 1px #111; white-space: nowrap; }
.gtab.on { background: #5f5f5f; border-top: 1px solid #a8842c; padding-left: 5px; gap: 5px; }

/* Graph canvas */
.graph { flex: 1; min-height: 0; border: 2px solid #5f5f5f; position: relative; overflow: hidden; background-color: #262626;
  background-image:
    linear-gradient(#0a0a0a, #0a0a0a),
    linear-gradient(90deg, #141414 2px, transparent 2px), linear-gradient(#141414 2px, transparent 2px),
    linear-gradient(90deg, #353535 1.500px, transparent 1.500px), linear-gradient(#353535 1.500px, transparent 1.500px);
  background-size: 100% 2px, 86.400px 86.400px, 86.400px 86.400px, 10.800px 10.800px, 10.800px 10.800px;
  background-position: 0 496px, 23.400px 0, 0 65px, 23.400px 0, 0 65px;
  background-repeat: no-repeat, repeat, repeat, repeat, repeat; }
.watermark { position: absolute; right: 10px; bottom: 16px; font: 700 64.500px/64px Roboto, sans-serif; color: rgba(255,255,255,.17); transform: scaleX(.86); transform-origin: right; }
.board { position: absolute; left: -301px; top: -146px; width: 1920px; height: 1040px; font-size: 7.900px; line-height: 12px; letter-spacing: -.25px; color: #ececec; }
.wires { position: absolute; left: 0; top: 0; }
.crumbs { position: absolute; inset: 0 0 auto; height: 42px; background: rgba(0,0,0,.55); display: flex; align-items: center; padding: 0 4px 3px 13px; }
.nav { margin-right: 25px; }
.path { position: absolute; left: 599px; display: flex; align-items: center; font-size: 18.670px; color: #8c8c8c; }
.path span { margin: 0 9px 0 15px; }
.path svg + span + svg + span { margin-left: 10px; }
.zoom { margin-left: auto; font-size: 18.800px; color: #333; padding-bottom: 4px; }

.comment { position: absolute; background: rgba(255,255,255,.27); border: 2px solid rgba(60,60,60,.45); box-shadow: 0 2px 5px rgba(0,0,0,.6); display: flex; flex-direction: column; justify-content: space-between; align-items: flex-end; }
.comment h2 { align-self: stretch; font: 700 15.450px/19px Roboto, sans-serif; letter-spacing: 0; color: #eee; background: #a8a8a8; padding: 3px 6px 2px 7px; text-shadow: 1px 1px 1px #222; border-top: 1px solid #bbb; }
.c-attack { left: 389px; top: 234px; width: 713px; height: 345px; }
.c-block { left: 1124px; top: 234px; width: 313px; height: 151px; }
.c-walk { left: 1124px; top: 407px; width: 302px; height: 140px; }
.c-draw { left: 389px; top: 623px; width: 422px; height: 162px; }
.c-kick { left: 389px; top: 806px; width: 422px; height: 151px; }
.c-crouch { left: 843px; top: 612px; width: 583px; height: 173px; }
.c-jump { left: 832px; top: 806px; width: 421px; height: 162px; }
.c-run { left: 1286px; top: 817px; width: 302px; height: 140px; }

.bubble { position: absolute; height: 28px; padding: 0 7px; font-size: 12.800px; line-height: 26px; letter-spacing: 0; color: #555; white-space: nowrap; border: 1px solid #f5f5f5; border-radius: 4px; background: linear-gradient(#bebebe, #dcdcdc); }
.bubble::after { content: ""; position: absolute; left: 7px; top: 26px; border: 5px solid transparent; border-top: 6px solid #ccc; }
.b-attack { left: 389px; top: 199px; width: 372px; }
.b-block { left: 1124px; top: 199px; width: 151px; }
.b-walk { left: 1124px; top: 372px; width: 95px; }
.b-crouch { left: 843px; top: 577px; width: 106px; border-left-color: rgba(245,245,245,.4); background: linear-gradient(#c4c4c4, #c8c8c8) 0 0 / 100% 10px no-repeat, linear-gradient(#c4c4c4, #dcdcdc) 42px 0 / 62px 100% no-repeat; }
.b-draw { left: 389px; top: 588px; width: 497px; letter-spacing: .085px; }
.b-kick { left: 389px; top: 771px; width: 62px; }
.b-jump { left: 832px; top: 771px; width: 115px; }
.b-run { left: 1286px; top: 782px; width: 100px; }
.b-crouch::after { display: none; }

.node { position: absolute; border: 1px solid #0c0c0c; border-radius: 4px; background: linear-gradient(rgba(36,38,36,.96), rgba(20,23,20,.96)); box-shadow: 0 2px 4px rgba(0,0,0,.55); text-shadow: 0 0 1px rgba(0,0,0,.6); white-space: nowrap; }
.node .e { width: 8px; height: 9px; }
.node .d { width: 10px; height: 8px; }
.node .cb { width: 12px; height: 12px; }
.node h4 { height: 15px; font: 700 7.900px/15px Roboto, sans-serif; display: flex; align-items: center; gap: 3px; padding: 0 0 1px 7px; border-radius: 3px 3px 0 0; color: #f0f0f0; border-top: 1px solid rgba(255,255,255,.25); }
.node h5 { font: 700 7.900px/11px Roboto, sans-serif; color: #f2f2f2; }
.node h6 { font: italic 400 7.900px/11px Roboto, sans-serif; color: #8a8a6c; }
.node p { display: flex; align-items: center; height: 19px; }
.event { height: 75px; }
.event h4 { margin-bottom: 1.500px; background: linear-gradient(90deg, #8e1212, #7d1616 50%, #4a3030 85%, #3c3c3c); }
.event p { justify-content: flex-end; gap: 3px; padding-right: 7px; }
.branch h4 { background: linear-gradient(100deg, #8d8d8d, #6f6f6f 45%, #333 65%, #2d2f2d); height: 16px; margin-bottom: 2px; padding-left: 6px; }
.branch { height: 58px; }
.branch p { padding: 0 7px; height: 18.700px; }
.branch em, .set em { margin-left: 3px; }
.branch span, .call span { margin: 0 3px 0 auto; }
.var { border-radius: 10px; height: 22px; display: flex; align-items: center; justify-content: flex-end; gap: 3px; padding: 0 8.500px 1px 0; border: 1.500px solid #222; border-top-color: #999; background: radial-gradient(ellipse 50% 70% at 50% 0, rgba(160,40,40,.85), transparent), linear-gradient(#595959, #383838 60%, #454545); }
.set { border-radius: 8px; height: 50px; padding: 2px 8px 0 9px; border: 1.500px solid #1c1c1c; border-top-color: #999; background: radial-gradient(ellipse 40% 40% at 45% 0, rgba(140,30,30,.85), transparent), linear-gradient(#4a4a4a, #3c3c3c 50%, #484848); }
.set div { display: flex; align-items: center; justify-content: space-between; height: 25px; }
.set b { align-self: flex-start; font-weight: 700; padding-top: 1px; }
.set .val { height: 17px; justify-content: flex-start; }
.set .cb { margin-left: 4px; }
.set .out { margin-left: auto; margin-bottom: 4px; }
.coll { padding: 2.500px 0 0 6px; width: 85px; background: radial-gradient(ellipse 40% 40% at 54% 60%, rgba(88,90,86,.95) 20%, transparent), linear-gradient(#272927, #171a17); }
.coll h6 + p { margin-top: 3px; }
.coll p { gap: 3px; padding-left: 1px; height: 19px; }
.sel { border: 2px solid #e8a020; padding: 2px 0 0 6px; }
.call header { height: 26px; display: flex; gap: 3px; padding: 2px 0 0 5px; background: linear-gradient(100deg, #4b7591, #456a82 50%, #32414a 80%, #333); border-radius: 3px 3px 0 0; border-top: 1px solid #8aa; }
.call h6 { color: #8d9a90; }
.call p { padding: 0 8px 0 7px; height: 19px; }
.call header + p { margin-top: 1px; }
.call u { border: 1px solid #bbb; line-height: 10px; padding: 0 2px; margin-left: 4px; }

.n-lmb { left: 422px; top: 385px; width: 104px; }
.n-rmb { left: 1156px; top: 288px; width: 109px; }
.n-alt { left: 1178px; top: 450px; width: 66px; }
.n-r { left: 411px; top: 687px; width: 59px; }
.n-c { left: 400px; top: 849px; width: 59px; }
.n-crouch { left: 854px; top: 677px; width: 105px; }
.n-jump { left: 865px; top: 871px; width: 100px; }
.n-shift { left: 1318px; top: 860px; width: 74px; }
.n-b1 { left: 595px; top: 309px; width: 109px; }
.n-b2 { left: 767px; top: 288px; width: 110px; }
.n-b3 { left: 994px; top: 677px; width: 110px; }
.n-v1 { left: 605px; top: 375px; width: 90px; }
.n-v2 { left: 789px; top: 353px; width: 89px; }
.n-v3 { left: 1005px; top: 741px; width: 90px; }
.n-s1 { left: 919px; top: 277px; width: 144px; }
.n-s2 { left: 929px; top: 332px; width: 122px; }
.n-s3 { left: 584px; top: 494px; width: 122px; }
.n-s4 { left: 746px; top: 494px; width: 144px; }
.n-draww { left: 798px; top: 394px; width: 85px; height: 53px; }
.n-blockn { left: 1307px; top: 277px; height: 68px; }
.n-walkn { left: 1286px; top: 439px; height: 68px; }
.n-sheath { left: 541px; top: 677px; width: 89px; height: 49px; }
.n-kickn { left: 595px; top: 839px; height: 68px; }
.n-jumpn { left: 1037px; top: 860px; width: 81px; height: 50px; }
.n-runn { left: 1469px; top: 871px; height: 68px; }
.n-time { left: 1253px; top: 666px; width: 144px; height: 49px; }
.n-toggle { left: 1135px; top: 666px; width: 99px; height: 69px; }

/* Details */
.details { flex: 1; background: #5f5f5f; padding: 2px 2px 0; display: flex; flex-direction: column; gap: 2px; }
.dbar { height: 26px; display: flex; align-items: center; color: #bbb; }
.dbar .search { width: 194px; margin-bottom: 1px; }
.gridbtn { width: 26px; height: 22px; margin: 0 5px; border: 1px solid #444; background: linear-gradient(#e2e2e2, #b8b8b8); display: flex; align-items: center; justify-content: center; }
.dbar .car { margin-left: 3px; }
.dsec { background: linear-gradient(90deg, transparent 254px, #4a4a4a 254px, #4a4a4a 255px, transparent 255px), #3e3e3e; border-radius: 3px; font-size: 11px; letter-spacing: .15px; overflow: hidden; }
.dsec h3 { height: 22px; background: #303030; display: flex; align-items: center; gap: 4px; padding: 0 0 1px 3px; font: 700 12px/22px Roboto, sans-serif; color: #e0e0e0; text-shadow: 1px 1px #000; letter-spacing: 0; }
.prop { height: 23px; display: flex; align-items: center; }
.prop.h21 { height: 21px; }
.prop label { width: 85px; height: 100%; padding: 0 0 1px 16px; border-right: 1px solid #303030; display: flex; align-items: center; white-space: nowrap; }
.field, .swatch { margin-left: 5px; width: 125px; height: 16px; line-height: 15px; background: #d6d6d6; border-radius: 3px; color: #111; padding-left: 4px; }
.swatch { background: #fff; border-radius: 0; }
.prop.pin { height: 27px; }
.pin label { padding-left: 5px; gap: 5px; }
.field.small { margin-left: 0; width: 68px; }
.combo { width: 82px; height: 20px; margin-left: 5px; border: 1px solid #222; background: linear-gradient(#b8b8b8, #dcdcdc); color: #111; display: flex; align-items: center; gap: 2px; padding: 0 2px; }
.combo i { width: 14px; height: 7px; border-radius: 3px; background: linear-gradient(#fff, #777); }
.combo svg { margin-left: auto; }
.g9 { margin: 0 10px 0 3px; }
.new { height: 28px; display: flex; justify-content: flex-end; padding: 3px 19px 0 0; }
.new button { width: 33px; height: 20px; background: linear-gradient(#ddd, #bbb); border: 1px solid #eee; color: #111; font-size: 12px; }
.last .new { height: 40px; padding-top: 15px; }

/* Taskbar */
.taskbar { height: 40px; background: #202020; display: flex; position: relative; font-family: "Open Sans", sans-serif; color: #fff; }
.start { width: 48px; display: flex; align-items: center; justify-content: center; }
.cortana { width: 344px; background: #333; display: flex; align-items: center; padding-left: 9px; gap: 10px; color: #a0a0a0; font-size: 14px; }
.mic { margin: 0 16px 0 auto; }
.ghost { position: absolute; left: 392px; top: 18px; display: flex; gap: 82px; color: #090909; }
.ghost2 { position: absolute; right: 0; top: 12px; display: flex; align-items: center; gap: 5px; color: #0a0a0a; }
.apps { display: flex; position: relative; }
.app { width: 49px; height: 40px; display: flex; align-items: center; justify-content: center; padding-top: 1px; border-bottom: 2px solid transparent; }
.app.run { background: linear-gradient(#76a9ea, #76a9ea) 50% 100% / 40px 2px no-repeat; background-origin: border-box; }
.app.active { background: #4f4f4f; border-bottom-color: #76a9ea; }
.tray { margin-left: auto; display: flex; align-items: center; padding-right: 15px; gap: .300px; position: relative; }
.lang { margin-left: 6px; font-size: 11.500px; }
.clock { width: 56px; margin-left: 15px; display: flex; flex-direction: column; align-items: center; font-size: 11.500px; line-height: 18px; letter-spacing: -.4px; white-space: nowrap; padding-top: 1px; }
```
